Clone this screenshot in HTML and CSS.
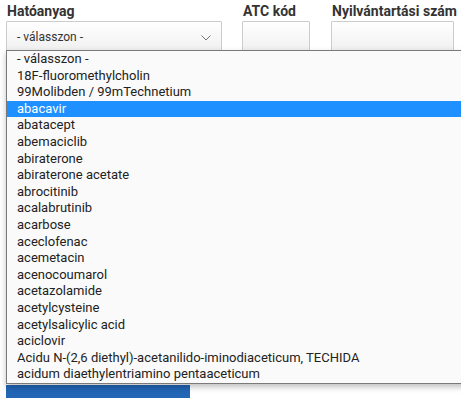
FILE: index.html
```html
<!DOCTYPE html>
<html>
	<head>
		<meta charset="UTF-8">
		<title>Keresés</title>
		<link rel="stylesheet" href="styles.css">
	</head>
	<body>
		<div class="search">
			<div class="row">
				<div class="field f-drug">
					<label>Hatóanyag</label>
					<div class="select">
						<span>- válasszon -</span>
						<svg class="chev" width="10" height="6" viewBox="0 0 10 6"><path d="M0.5 0.5 L5 5 L9.5 0.5" fill="none" stroke="#777" stroke-width="1"/></svg>
					</div>
				</div>
				<div class="field f-atc">
					<label>ATC kód</label>
					<div class="input"></div>
				</div>
				<div class="field f-reg">
					<label>Nyilvántartási szám</label>
					<div class="input"></div>
				</div>
			</div>
			<div class="btn-row">
				<a href="#" class="btn" aria-label="Keresés"></a>
			</div>

			<ul class="options">
				<li>- válasszon -</li>
				<li>18F-fluoromethylcholin</li>
				<li>99Molibden / 99mTechnetium</li>
				<li class="active">abacavir</li>
				<li>abatacept</li>
				<li>abemaciclib</li>
				<li>abiraterone</li>
				<li>abiraterone acetate</li>
				<li>abrocitinib</li>
				<li>acalabrutinib</li>
				<li>acarbose</li>
				<li>aceclofenac</li>
				<li>acemetacin</li>
				<li>acenocoumarol</li>
				<li>acetazolamide</li>
				<li>acetylcysteine</li>
				<li>acetylsalicylic acid</li>
				<li>aciclovir</li>
				<li>Acidu N-(2,6 diethyl)-acetanilido-iminodiaceticum, TECHIDA</li>
				<li>acidum diaethylentriamino pentaaceticum</li>
			</ul>
		</div>
	</body>
</html>
```

FILE: styles.css
```css
*{
	padding:0px;margin:0px;list-style: none;box-sizing: border-box;
}
a{
	text-decoration: none;
}
html,body{
	overflow: hidden;
}
body{
	background: #fff;
	font-family: Roboto, "Liberation Sans", sans-serif;
	color: #333;
}
.search{
	position: relative;
	padding: 3px 0 0 6px;
}
.row{
	display: flex;
}
.field label{
	display: block;
	font-size: 14px;
	font-weight: bold;
	line-height: 17px;
	height: 18px;
	padding-left: 1px;
	color: #333;
	white-space: nowrap;
}
.select,.input{
	height: 32px;
	border: 1px solid #ccc;
	border-radius: 1px;
	background: linear-gradient(#fff, #efefef);
}
.f-drug{
	width: 216px;
}
.select{
	display: flex;
	align-items: center;
	justify-content: space-between;
	padding: 0 10px 0 10px;
	font-size: 12px;
	color: #333;
}
.chev{
	margin-top: 1px;
}
.f-atc{
	margin-left: 20px;
	width: 68px;
}
.f-reg{
	margin-left: 21px;
	width: 123px;
}
.btn-row{
	margin-top: 332px;
}
.btn{
	display: block;
	width: 184px;
	height: 13px;
	background: #2266b5;
}
.options{
	position: absolute;
	left: 6px;
	top: 50px;
	width: 470px;
	background: #fafafa;
	border: 1px solid #7a7a7a;
	box-shadow: 0 3px 6px rgba(0,0,0,.25);
}
.options li{
	height: 16.6px;
	line-height: 16.6px;
	padding-left: 10px;
	font-size: 13px;
	color: #222;
	white-space: nowrap;
}
.options li.active{
	background: #1e90ff;
	color: #fff;
}
```
